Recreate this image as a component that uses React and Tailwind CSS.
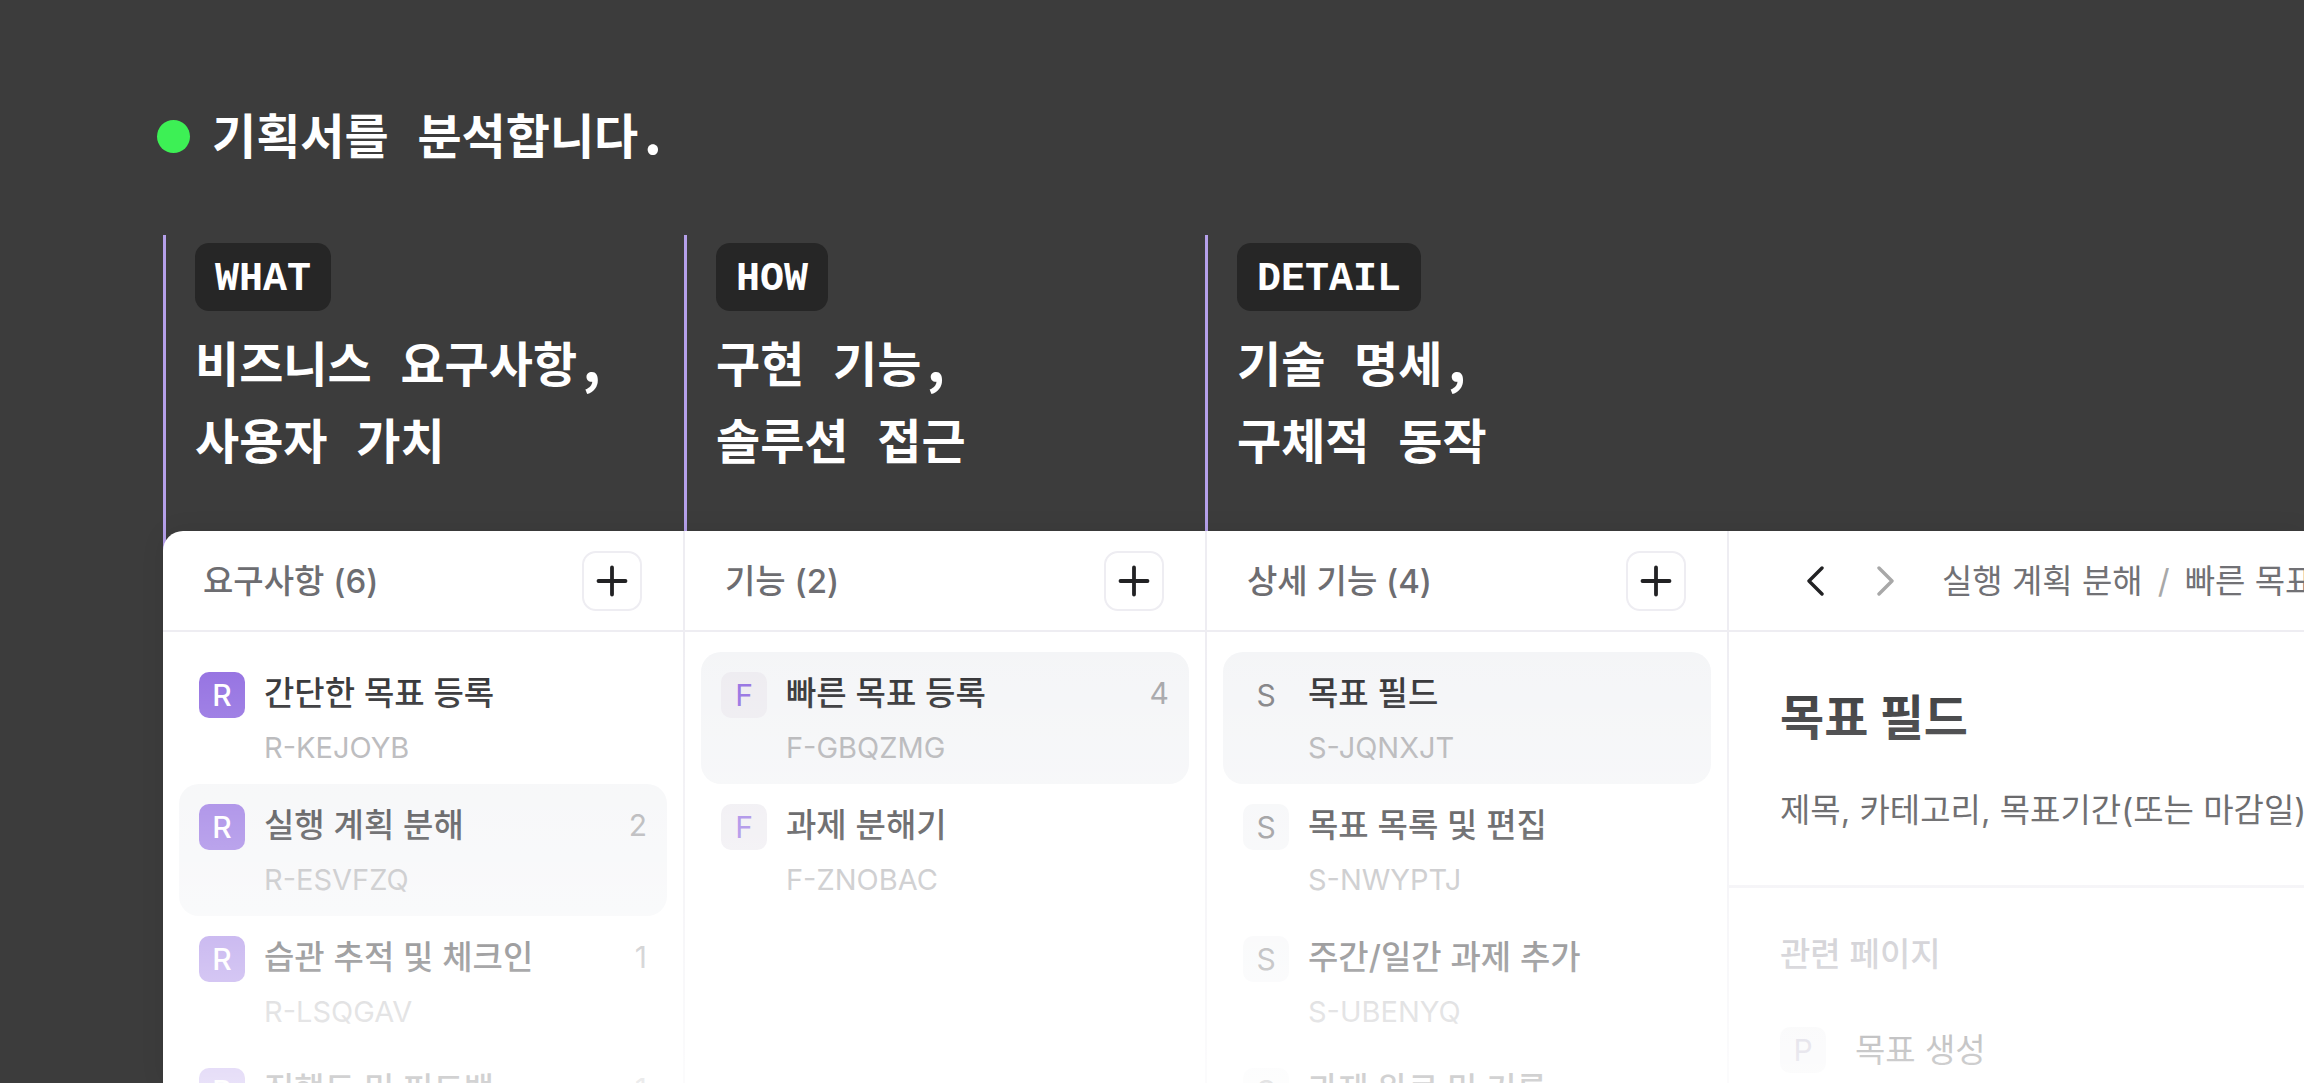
import React from "react";

const phases = [
  { tag: "WHAT", lines: ["비즈니스 요구사항", "사용자 가치"] },
  { tag: "HOW", lines: ["구현 기능", "솔루션 접근"] },
  { tag: "DETAIL", lines: ["기술 명세", "구체적 동작"] },
];

const columns = [
  {
    title: "요구사항 (6)",
    letter: "R",
    items: [
      { name: "간단한 목표 등록", id: "R-KEJOYB" },
      { name: "실행 계획 분해", id: "R-ESVFZQ", count: 2, selected: true },
      { name: "습관 추적 및 체크인", id: "R-LSQGAV", count: 1 },
      { name: "진행도 및 피드백", count: 1 },
    ],
  },
  {
    title: "기능 (2)",
    letter: "F",
    items: [
      { name: "빠른 목표 등록", id: "F-GBQZMG", count: 4, selected: true },
      { name: "과제 분해기", id: "F-ZNOBAC" },
    ],
  },
  {
    title: "상세 기능 (4)",
    letter: "S",
    items: [
      { name: "목표 필드", id: "S-JQNXJT", selected: true },
      { name: "목표 목록 및 편집", id: "S-NWYPTJ" },
      { name: "주간/일간 과제 추가", id: "S-UBENYQ" },
      { name: "과제 완료 및 기록" },
    ],
  },
];

const badgeStyles = {
  R: "bg-[#8f6ae0] text-white font-medium",
  F: "bg-[#edebf0] text-[#8f6ae0]",
  S: "bg-[#f4f5f7] text-[#7a7a7d]",
  P: "bg-[#f0f0f3] text-[#a9a3bd]",
};

function Mark({ children }) {
  return (
    <span className="inline-block w-[29px] text-center font-['Noto_Sans_CJK_KR',sans-serif] text-[56px] leading-9">{children}</span>
  );
}

function Badge({ letter }) {
  return (
    <span
      className={`flex size-[46px] shrink-0 items-center justify-center rounded-[10px] text-[30px] leading-none ${badgeStyles[letter]}`}
    >
      {letter}
    </span>
  );
}

function Chevron({ d }) {
  return (
    <svg viewBox="0 0 18 30" className="h-[30px] w-[18px]" fill="none" stroke="currentColor" strokeWidth="3.4" strokeLinecap="round" strokeLinejoin="round">
      <path d={d} />
    </svg>
  );
}

function Item({ letter, item }) {
  return (
    <li>
      <button
        type="button"
        className={`flex h-[132px] w-full items-start gap-[19px] rounded-[20px] px-5 pt-4 text-left ${item.selected ? "bg-[#f4f5f7]" : ""}`}
      >
        <span className="pt-1">
          <Badge letter={letter} />
        </span>
        <span className="flex min-w-0 flex-1 flex-col gap-3">
          <span className="truncate text-[33px] leading-[50px] font-medium text-[#27272a]">{item.name}</span>
          {item.id && <span className="text-[29px] leading-9 text-[#acacaf]">{item.id}</span>}
        </span>
        {item.count && <span className="text-[30px] leading-[50px] text-[#a0a0a3]">{item.count}</span>}
      </button>
    </li>
  );
}

function Column({ column }) {
  return (
    <section className="border-r-2 border-[#eeedf2]">
      <header className="flex h-[101px] items-center justify-between border-b-2 border-[#eeedf2] pr-[41px] pl-10">
        <h2 className="text-[33px] leading-[50px] font-medium text-[#6d6d71]">{column.title}</h2>
        <button
          type="button"
          aria-label={`${column.title} 추가`}
          className="flex size-[60px] items-center justify-center rounded-[14px] border-2 border-[#eeedf2] text-[#222224]"
        >
          <svg viewBox="0 0 32 32" className="size-8" stroke="currentColor" strokeWidth="3.8" strokeLinecap="round">
            <path d="M16 2.5V29.5M2.5 16H29.5" />
          </svg>
        </button>
      </header>
      <ul className="px-4 pt-5">
        {column.items.map((item) => (
          <Item key={item.name} letter={column.letter} item={item} />
        ))}
      </ul>
    </section>
  );
}

function Detail() {
  return (
    <section className="min-w-0 overflow-hidden whitespace-nowrap">
      <header className="flex h-[101px] items-center border-b-2 border-[#eeedf2] pl-[77px] text-[33px] leading-[50px] text-[#717175]">
        <button type="button" aria-label="이전" className="mr-[53px] text-[#222224]">
          <Chevron d="M16 2L3 15L16 28" />
        </button>
        <button type="button" aria-label="다음" className="mr-[47px] text-[#a8a8a8]">
          <Chevron d="M2 2L15 15L2 28" />
        </button>
        <nav aria-label="경로" className="flex gap-[15px]">
          <a href="#plan">실행 계획 분해</a>
          <span className="text-[#a8a8a8]">/</span>
          <a href="#quick">빠른 목표 등록</a>
        </nav>
      </header>
      <div className="border-b-[3px] border-[#eeedf2] px-[51px] pt-[51px] pb-[50px]">
        <h2 className="text-[48px] leading-[70px] font-bold text-[#2b2c2e]">목표 필드</h2>
        <p className="mt-8 text-[33px] leading-[50px] text-[#2d2d30]">제목, 카테고리, 목표기간(또는 마감일)</p>
      </div>
      <div className="px-[51px] pt-[41px]">
        <h3 className="text-[33px] leading-[50px] font-medium text-[#a3a2ab]">관련 페이지</h3>
        <a href="#create" className="mt-[46px] flex items-center gap-[29px] text-[33px] leading-[50px] text-[#2d2d30]">
          <Badge letter="P" />
          목표 생성
        </a>
      </div>
    </section>
  );
}

export default function App() {
  return (
    <main className="flex h-screen flex-col overflow-hidden bg-[#3c3c3c]">
      <h1 className="mt-[98px] ml-[157px] flex h-[77px] items-center gap-[22px] font-['Liberation_Mono','Noto_Sans_CJK_KR',monospace] text-[48px] leading-[77px] font-bold text-white">
        <span className="size-[33px] rounded-full bg-[#3df055]" />
        <span className="pt-2.5">
          기획서를 분석합니다<Mark>.</Mark>
        </span>
      </h1>

      <div className="mt-[60px] ml-[163px] grid grid-cols-[521px_521px_1fr] font-['Liberation_Mono','Noto_Sans_CJK_KR',monospace] font-bold text-white">
        {phases.map((p) => (
          <div key={p.tag} className="border-l-[3px] border-[#b5a0ea] pt-2 pb-[66px] pl-[29px]">
            <span className="flex h-[68px] w-fit items-center rounded-[14px] bg-[#262626] px-5 pt-1.5 text-[40px] leading-none">
              {p.tag}
            </span>
            <p className="mt-5 text-[48px] leading-[77px]">
              {p.lines[0]}
              <Mark>,</Mark>
              <br />
              {p.lines[1]}
            </p>
          </div>
        ))}
      </div>

      <div className="relative z-10 -mt-5 ml-[163px] grid min-h-0 flex-1 grid-cols-[522px_522px_522px_1fr] rounded-tl-[20px] bg-white font-['Inter','Noto_Sans_CJK_KR',sans-serif] shadow-[0_0_24px_rgba(0,0,0,0.08)]">
        {columns.map((c) => (
          <Column key={c.title} column={c} />
        ))}
        <Detail />
        <div className="pointer-events-none absolute inset-0 bg-linear-to-b from-white/0 from-18% to-white/80" />
      </div>
    </main>
  );
}
